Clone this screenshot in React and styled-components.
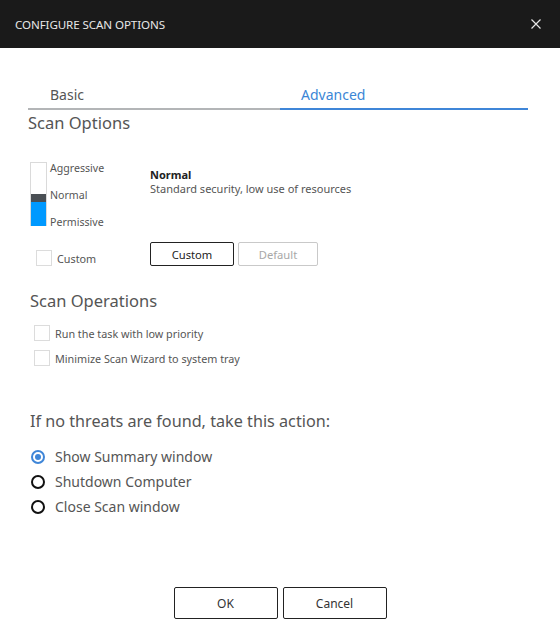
import React, { useState } from "react";
import styled, { createGlobalStyle } from "styled-components";

const GlobalStyle = createGlobalStyle`
  html, body {
    margin: 0;
    padding: 0;
    background: #ffffff;
  }
  body {
    font-family: "Noto Sans", "Open Sans", sans-serif;
    color: #444;
  }
`;

const Dialog = styled.div`
  width: 560px;
  height: 638px;
  display: flex;
  flex-direction: column;
  background: #fff;
  overflow: hidden;
`;

const TitleBar = styled.div`
  height: 48px;
  flex: 0 0 48px;
  background: #1a1a1a;
  display: flex;
  align-items: center;
  justify-content: space-between;
  padding: 0 18px 0 15px;
`;

const Title = styled.span`
  color: #e8e8e8;
  font-size: 11.6px;
  letter-spacing: -0.1px;
`;

const CloseButton = styled.button`
  border: 0;
  background: none;
  padding: 0;
  width: 12px;
  height: 12px;
  display: flex;
  align-items: center;
  justify-content: center;
  cursor: pointer;
`;

const Body = styled.div`
  flex: 1;
  display: flex;
  flex-direction: column;
  padding: 37px 32px 0 28px;
`;

const Tabs = styled.div`
  display: grid;
  grid-template-columns: 252px 1fr;
`;

const Tab = styled.div`
  padding: 0 0 3px ${(p) => (p.$active ? 21 : 22)}px;
  font-size: 14px;
  line-height: 20px;
  color: ${(p) => (p.$active ? "#3b86d6" : "#555")};
  border-bottom: 2px solid ${(p) => (p.$active ? "#3f86d8" : "#b3b5b7")};
  cursor: pointer;
`;

const SectionTitle = styled.h2`
  margin: ${(p) => p.$mt || 0}px 0 0 ${(p) => p.$ml || 0}px;
  font-size: ${(p) => p.$size || 16.5}px;
  line-height: 26px;
  font-weight: 400;
  color: #555;
`;

const LevelRow = styled.div`
  display: flex;
  margin-top: 26px;
  margin-left: 2px;
`;

const LevelColumn = styled.div`
  width: 120px;
  display: flex;
`;

const Gauge = styled.div`
  width: 15px;
  height: 63px;
  border: 1px solid #dadada;
  border-bottom: 0;
  display: flex;
  flex-direction: column;
  justify-content: flex-end;
`;

const GaugeMark = styled.div`
  height: 8px;
  background: #4a4f54;
`;

const GaugeFill = styled.div`
  height: 24px;
  background: #0099ff;
`;

const LevelLabels = styled.div`
  display: flex;
  flex-direction: column;
  justify-content: space-between;
  margin-left: 3px;
  margin-top: -1px;
  font-size: 10.6px;
  line-height: 14px;
  color: #555;
  height: 68px;
`;

const LevelInfo = styled.div`
  padding-top: 6px;
  font-size: 11px;
  line-height: 14px;
`;

const LevelName = styled.div`
  font-weight: 700;
  color: #222;
`;

const LevelDesc = styled.div`
  color: #555;
`;

const CustomRow = styled.div`
  display: flex;
  align-items: flex-end;
  margin-top: 13px;
  margin-left: 2px;
`;

const CheckRow = styled.label`
  display: flex;
  align-items: center;
  gap: 5px;
  margin-left: 6px;
  width: ${(p) => p.$w || "auto"};
  font-size: 10.8px;
  color: #555;
  cursor: pointer;
  & + & {
    margin-top: 9px;
  }
`;

const Box = styled.span`
  width: 14px;
  height: 14px;
  border: 1px solid #dcdcdc;
  background: #fff;
  flex: 0 0 auto;
`;

const SmallButton = styled.button`
  width: ${(p) => p.$w}px;
  height: 24px;
  margin-right: 4px;
  background: #fff;
  border: 1px solid ${(p) => (p.disabled ? "#c9c9c9" : "#222")};
  border-radius: 2px;
  color: ${(p) => (p.disabled ? "#a8a8a8" : "#222")};
  font-family: inherit;
  font-size: 11.2px;
  padding: 0;
`;

const Checks = styled.div`
  display: flex;
  flex-direction: column;
  margin-top: 11px;
`;

const Radios = styled.div`
  display: flex;
  flex-direction: column;
  gap: 5px;
  margin-top: 13px;
`;

const RadioRow = styled.label`
  display: flex;
  align-items: center;
  gap: 10px;
  margin-left: 3px;
  font-size: 14px;
  line-height: 20px;
  color: #555;
  cursor: pointer;
`;

const RadioDot = styled.span`
  width: 14px;
  height: 14px;
  box-sizing: border-box;
  border-radius: 50%;
  border: 2px solid ${(p) => (p.$on ? "#3f86d8" : "#111")};
  display: flex;
  align-items: center;
  justify-content: center;
  &::after {
    content: "";
    width: 6px;
    height: 6px;
    border-radius: 50%;
    background: ${(p) => (p.$on ? "#3f86d8" : "transparent")};
  }
`;

const Footer = styled.div`
  margin-top: auto;
  display: flex;
  justify-content: center;
  gap: 5px;
  padding: 0 0 19px 4px;
`;

const FooterButton = styled.button`
  width: 104px;
  height: 32px;
  background: #fff;
  border: 1px solid #222;
  border-radius: 2px;
  color: #333;
  font-family: inherit;
  font-size: 12px;
  cursor: pointer;
`;

const actions = ["Show Summary window", "Shutdown Computer", "Close Scan window"];

export default function App() {
  const [action, setAction] = useState(0);
  return (
    <>
      <GlobalStyle />
      <Dialog>
        <TitleBar>
          <Title>CONFIGURE SCAN OPTIONS</Title>
          <CloseButton aria-label="Close">
            <svg width="10" height="10" viewBox="0 0 10 10">
              <path d="M0.5 0.5L9.5 9.5M9.5 0.5L0.5 9.5" stroke="#e6e6e6" strokeWidth="1.2" />
            </svg>
          </CloseButton>
        </TitleBar>
        <Body>
          <Tabs>
            <Tab>Basic</Tab>
            <Tab $active>Advanced</Tab>
          </Tabs>
          <SectionTitle>Scan Options</SectionTitle>
          <LevelRow>
            <LevelColumn>
              <Gauge>
                <GaugeMark />
                <GaugeFill />
              </Gauge>
              <LevelLabels>
                <span>Aggressive</span>
                <span>Normal</span>
                <span>Permissive</span>
              </LevelLabels>
            </LevelColumn>
            <LevelInfo>
              <LevelName>Normal</LevelName>
              <LevelDesc>Standard security, low use of resources</LevelDesc>
            </LevelInfo>
          </LevelRow>
          <CustomRow>
            <CheckRow $w="114px">
              <Box />
              Custom
            </CheckRow>
            <SmallButton $w={84}>Custom</SmallButton>
            <SmallButton $w={80} disabled>
              Default
            </SmallButton>
          </CustomRow>
          <SectionTitle $mt={22} $ml={2}>
            Scan Operations
          </SectionTitle>
          <Checks>
            <CheckRow>
              <Box />
              Run the task with low priority
            </CheckRow>
            <CheckRow>
              <Box />
              Minimize Scan Wizard to system tray
            </CheckRow>
          </Checks>
          <SectionTitle $mt={42} $ml={2} $size={16.2}>
            If no threats are found, take this action:
          </SectionTitle>
          <Radios>
            {actions.map((label, i) => (
              <RadioRow key={label} onClick={() => setAction(i)}>
                <RadioDot $on={action === i} />
                {label}
              </RadioRow>
            ))}
          </Radios>
          <Footer>
            <FooterButton>OK</FooterButton>
            <FooterButton>Cancel</FooterButton>
          </Footer>
        </Body>
      </Dialog>
    </>
  );
}
